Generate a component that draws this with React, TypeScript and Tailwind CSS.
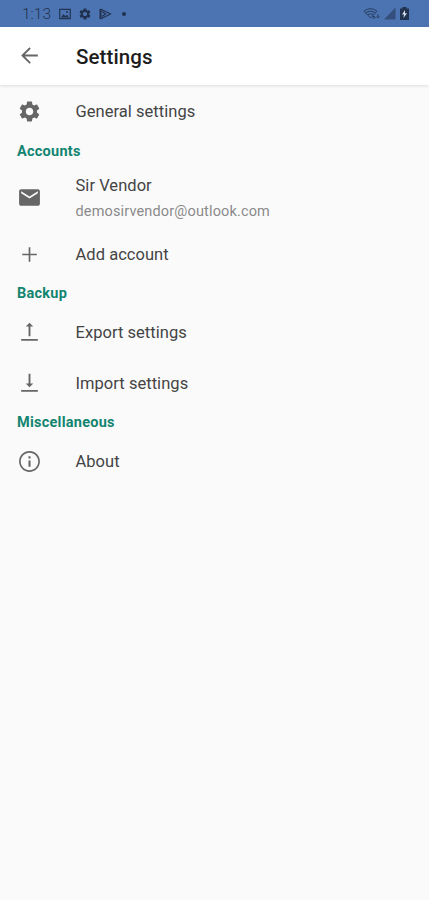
import type { ReactNode } from 'react';

const icons = {
  gear: 'M19.14 12.94c.04-.3.06-.61.06-.94 0-.32-.02-.64-.07-.94l2.03-1.58c.18-.14.23-.41.12-.61l-1.92-3.32c-.12-.22-.37-.29-.59-.22l-2.39.96c-.5-.38-1.03-.7-1.62-.94l-.36-2.54c-.04-.24-.24-.41-.48-.41h-3.84c-.24 0-.43.17-.47.41l-.36 2.54c-.59.24-1.13.57-1.62.94l-2.39-.96c-.22-.08-.47 0-.59.22L2.74 8.87c-.12.21-.08.47.12.61l2.03 1.58c-.05.3-.09.63-.09.94s.02.64.07.94l-2.03 1.58c-.18.14-.23.41-.12.61l1.92 3.32c.12.22.37.29.59.22l2.39-.96c.5.38 1.03.7 1.62.94l.36 2.54c.05.24.24.41.48.41h3.84c.24 0 .44-.17.47-.41l.36-2.54c.59-.24 1.13-.56 1.62-.94l2.39.96c.22.08.47 0 .59-.22l1.92-3.32c.12-.22.07-.47-.12-.61l-2.01-1.58zM12 15.6c-1.98 0-3.6-1.62-3.6-3.6s1.62-3.6 3.6-3.6 3.6 1.62 3.6 3.6-1.62 3.6-3.6 3.6z',
  mail: 'M20 4H4c-1.1 0-1.99.9-1.99 2L2 18c0 1.1.9 2 2 2h16c1.1 0 2-.9 2-2V6c0-1.1-.9-2-2-2zm0 4l-8 5-8-5V6l8 5 8-5v2z',
  add: 'M19 12.8h-6.2V19h-1.6v-6.2H5v-1.6h6.2V5h1.6v6.2H19z',
  upload: 'M4 18.2h16V20H4zM11.1 15.5V6.2H8.4L12 2.6l3.6 3.6h-2.7v9.3z',
  download: 'M4 18.2h16V20H4zM11.1 2.6v9.3H8.4l3.6 3.6 3.6-3.6h-2.7V2.6z',
  info: 'M11 7h2v2h-2zm0 4h2v6h-2zm1-9C6.48 2 2 6.48 2 12s4.48 10 10 10 10-4.48 10-10S17.52 2 12 2zm0 18.4c-4.6 0-8.4-3.8-8.4-8.4S7.4 3.6 12 3.6s8.4 3.8 8.4 8.4-3.8 8.4-8.4 8.4z',
  back: 'M20 11.1H7.5l5.7-5.7L12 4l-8 8 8 8 1.3-1.3-5.8-5.8H20z',
  image: 'M2 3h20v18H2zM4 5v14h16V5zM5 18l4.5-6 3.2 4 2.5-3L19 18zM14 7h3v3h-3z',
};

interface IconProps {
  name: keyof typeof icons;
  className?: string;
}

function Icon({ name, className = 'size-[25px]' }: IconProps) {
  return (
    <svg className={`shrink-0 ${className}`} viewBox="0 0 24 24" fill="currentColor" fillRule="evenodd">
      <path d={icons[name]} />
    </svg>
  );
}

interface RowProps {
  icon: keyof typeof icons;
  children: ReactNode;
  className?: string;
}

function Row({ icon, children, className = 'h-[50px]' }: RowProps) {
  return (
    <button className={`flex w-full items-center pl-[17px] text-left ${className}`}>
      <Icon name={icon} className="mb-px size-[25px] text-[#666]" />
      <span className="ml-[33.5px] text-[16.5px] leading-5 tracking-[0.04px] text-[#444]">{children}</span>
    </button>
  );
}

function Heading({ children, className = 'h-[29px]' }: { children: ReactNode; className?: string }) {
  return (
    <h2 className={`flex items-center pl-[17px] text-[14.5px] font-bold tracking-[0.25px] text-[#128570] ${className}`}>
      {children}
    </h2>
  );
}

function StatusBar() {
  return (
    <div className="flex h-[27px] items-center bg-[#4d74b2] pl-[22px] pr-[20px] text-[#20324f]">
      <span className="w-[31px] pt-[2px] text-[15.5px] font-light">1:13</span>
      <Icon name="image" className="ml-[5px] size-[14px]" />
      <Icon name="gear" className="ml-[6px] size-[14px]" />
      <svg className="ml-[7px] h-[12px] w-[13px]" viewBox="0 0 13 12" fill="none" stroke="currentColor">
        <path d="M1.500 1v10" strokeWidth="2" />
        <path d="M1.500 1L11.500 6 1.500 11M3 3.500L6.500 6 3 8.500" strokeWidth="1.200" />
      </svg>
      <span className="ml-[10px] size-1 rounded-full bg-current" />
      <div className="ml-auto flex items-center">
        <svg className="h-[14px] w-[17px]" viewBox="0 0 17 14" fill="none" stroke="currentColor" opacity=".8">
          <path d="M1 4.200Q7.500-1 14 4.200L7.500 11zM3 5.500q4.500-3 9 0M5 7.500q2.500-1.500 5 0" />
          <path d="M11 12V9m-1.500 1.500L11 9l1.500 1.500M15 7v4m-1.500-1.500L15 11l1.500-1.500" />
        </svg>
        <svg className="ml-[4px] h-[13px] w-[12px]" viewBox="0 0 12 13">
          <path d="M0 12.500L11.500.500v12z" fill="currentColor" opacity=".55" />
        </svg>
        <svg className="ml-[4px] h-[13px] w-[9px]" viewBox="0 0 9 13">
          <path d="M2.500 0h4v1.500H9V13H0V1.500h2.500z" fill="currentColor" />
          <path d="M5 3L2 7.500h2L3.500 11 7 6.300H5z" fill="#d5e0ee" />
        </svg>
      </div>
    </div>
  );
}

export default function App() {
  return (
    <div className="min-h-[900px] bg-[#fafafa] font-[Roboto,sans-serif]">
      <StatusBar />
      <header className="flex h-[58px] items-center bg-white pb-px pl-[17px] shadow-[0_1px_3px_rgba(0,0,0,0.12)]">
        <button aria-label="Back">
          <Icon name="back" className="block size-[25px] text-[#666]" />
        </button>
        <h1 className="ml-[34px] mt-[3px] text-[20.5px] font-medium tracking-[0.1px] text-[#1d1d1d]">Settings</h1>
      </header>
      <main className="pt-px">
        <Row icon="gear" className="h-[50px] pt-px">General settings</Row>
        <Heading className="h-[30px] pt-px">Accounts</Heading>
        <Row icon="mail" className="h-[63px]">
          <span className="block pt-[2px]">Sir Vendor</span>
          <span className="mt-[6px] block text-[14.5px] tracking-[0.15px] text-[#8a8a8a]">demosirvendor@outlook.com</span>
        </Row>
        <Row icon="add" className="h-[50px] pt-px">Add account</Row>
        <Heading>Backup</Heading>
        <Row icon="upload">Export settings</Row>
        <Row icon="download" className="h-[50px] pt-px">Import settings</Row>
        <Heading>Miscellaneous</Heading>
        <Row icon="info">About</Row>
      </main>
    </div>
  );
}
